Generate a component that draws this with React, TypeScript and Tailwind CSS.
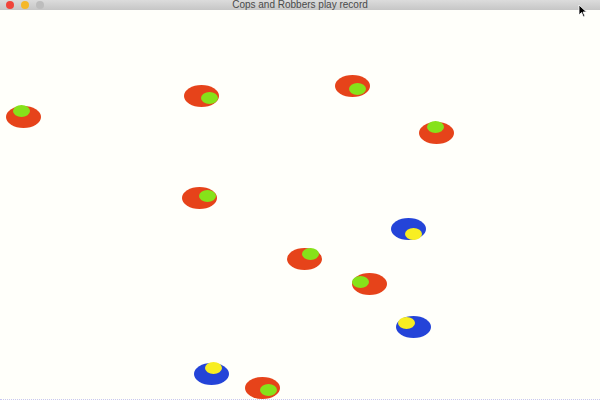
const tokens = [
  { kind: "cop", x: 6, y: 106, ix: 13, iy: 105 },
  { kind: "cop", x: 184, y: 85, ix: 201, iy: 92 },
  { kind: "cop", x: 335, y: 75, ix: 349, iy: 83 },
  { kind: "cop", x: 419, y: 122, ix: 427, iy: 121 },
  { kind: "cop", x: 182, y: 187, ix: 199, iy: 190 },
  { kind: "robber", x: 391, y: 218, ix: 405, iy: 228 },
  { kind: "cop", x: 287, y: 248, ix: 302, iy: 248 },
  { kind: "cop", x: 352, y: 273, ix: 352, iy: 276 },
  { kind: "robber", x: 396, y: 316, ix: 398, iy: 317 },
  { kind: "robber", x: 194, y: 363, ix: 205, iy: 362 },
  { kind: "cop", x: 245, y: 377, ix: 260, iy: 384 },
];

const TOP = 10;

export default function App() {
  return (
    <div className="flex h-[400px] w-[600px] flex-col overflow-hidden bg-[#fffffa]">
      <div className="relative flex h-[10px] shrink-0 items-center justify-center bg-gradient-to-b from-[#dcdcdc] to-[#c6c6c6]">
        <div className="absolute left-[6px] top-[1px] flex gap-[7px]">
          <span className="h-[8px] w-[8px] rounded-full bg-[#f0443a]" />
          <span className="h-[8px] w-[8px] rounded-full bg-[#f5b82a]" />
          <span className="h-[8px] w-[8px] rounded-full bg-[#bdbdbd]" />
        </div>
        <span className="text-[10px] leading-none text-[#4a4a4a] [font-family:'Liberation_Sans',sans-serif]">
          Cops and Robbers play record
        </span>
        <svg className="absolute left-[578px] top-[4px]" width="10" height="14" viewBox="0 0 10 14">
          <path d="M1 1 L1 11 L3.5 8.5 L5.5 13 L7 12.3 L5 8 L8.5 8 Z" fill="#000" stroke="#fff" strokeWidth="0.8" />
        </svg>
      </div>
      <div className="relative flex-1 border-b border-dotted border-[#c8c8f0]">
        {tokens.map((t, i) => (
          <div key={i}>
            <div
              className={`absolute h-[22px] w-[35px] rounded-[50%] ${t.kind === "cop" ? "bg-[#e6431a]" : "bg-[#2444d8]"}`}
              style={{ left: t.x, top: t.y - TOP }}
            />
            <div
              className={`absolute h-[12px] w-[17px] rounded-[50%] ${t.kind === "cop" ? "bg-[#86e21a]" : "bg-[#f8ee22]"}`}
              style={{ left: t.ix, top: t.iy - TOP }}
            />
          </div>
        ))}
      </div>
    </div>
  );
}
